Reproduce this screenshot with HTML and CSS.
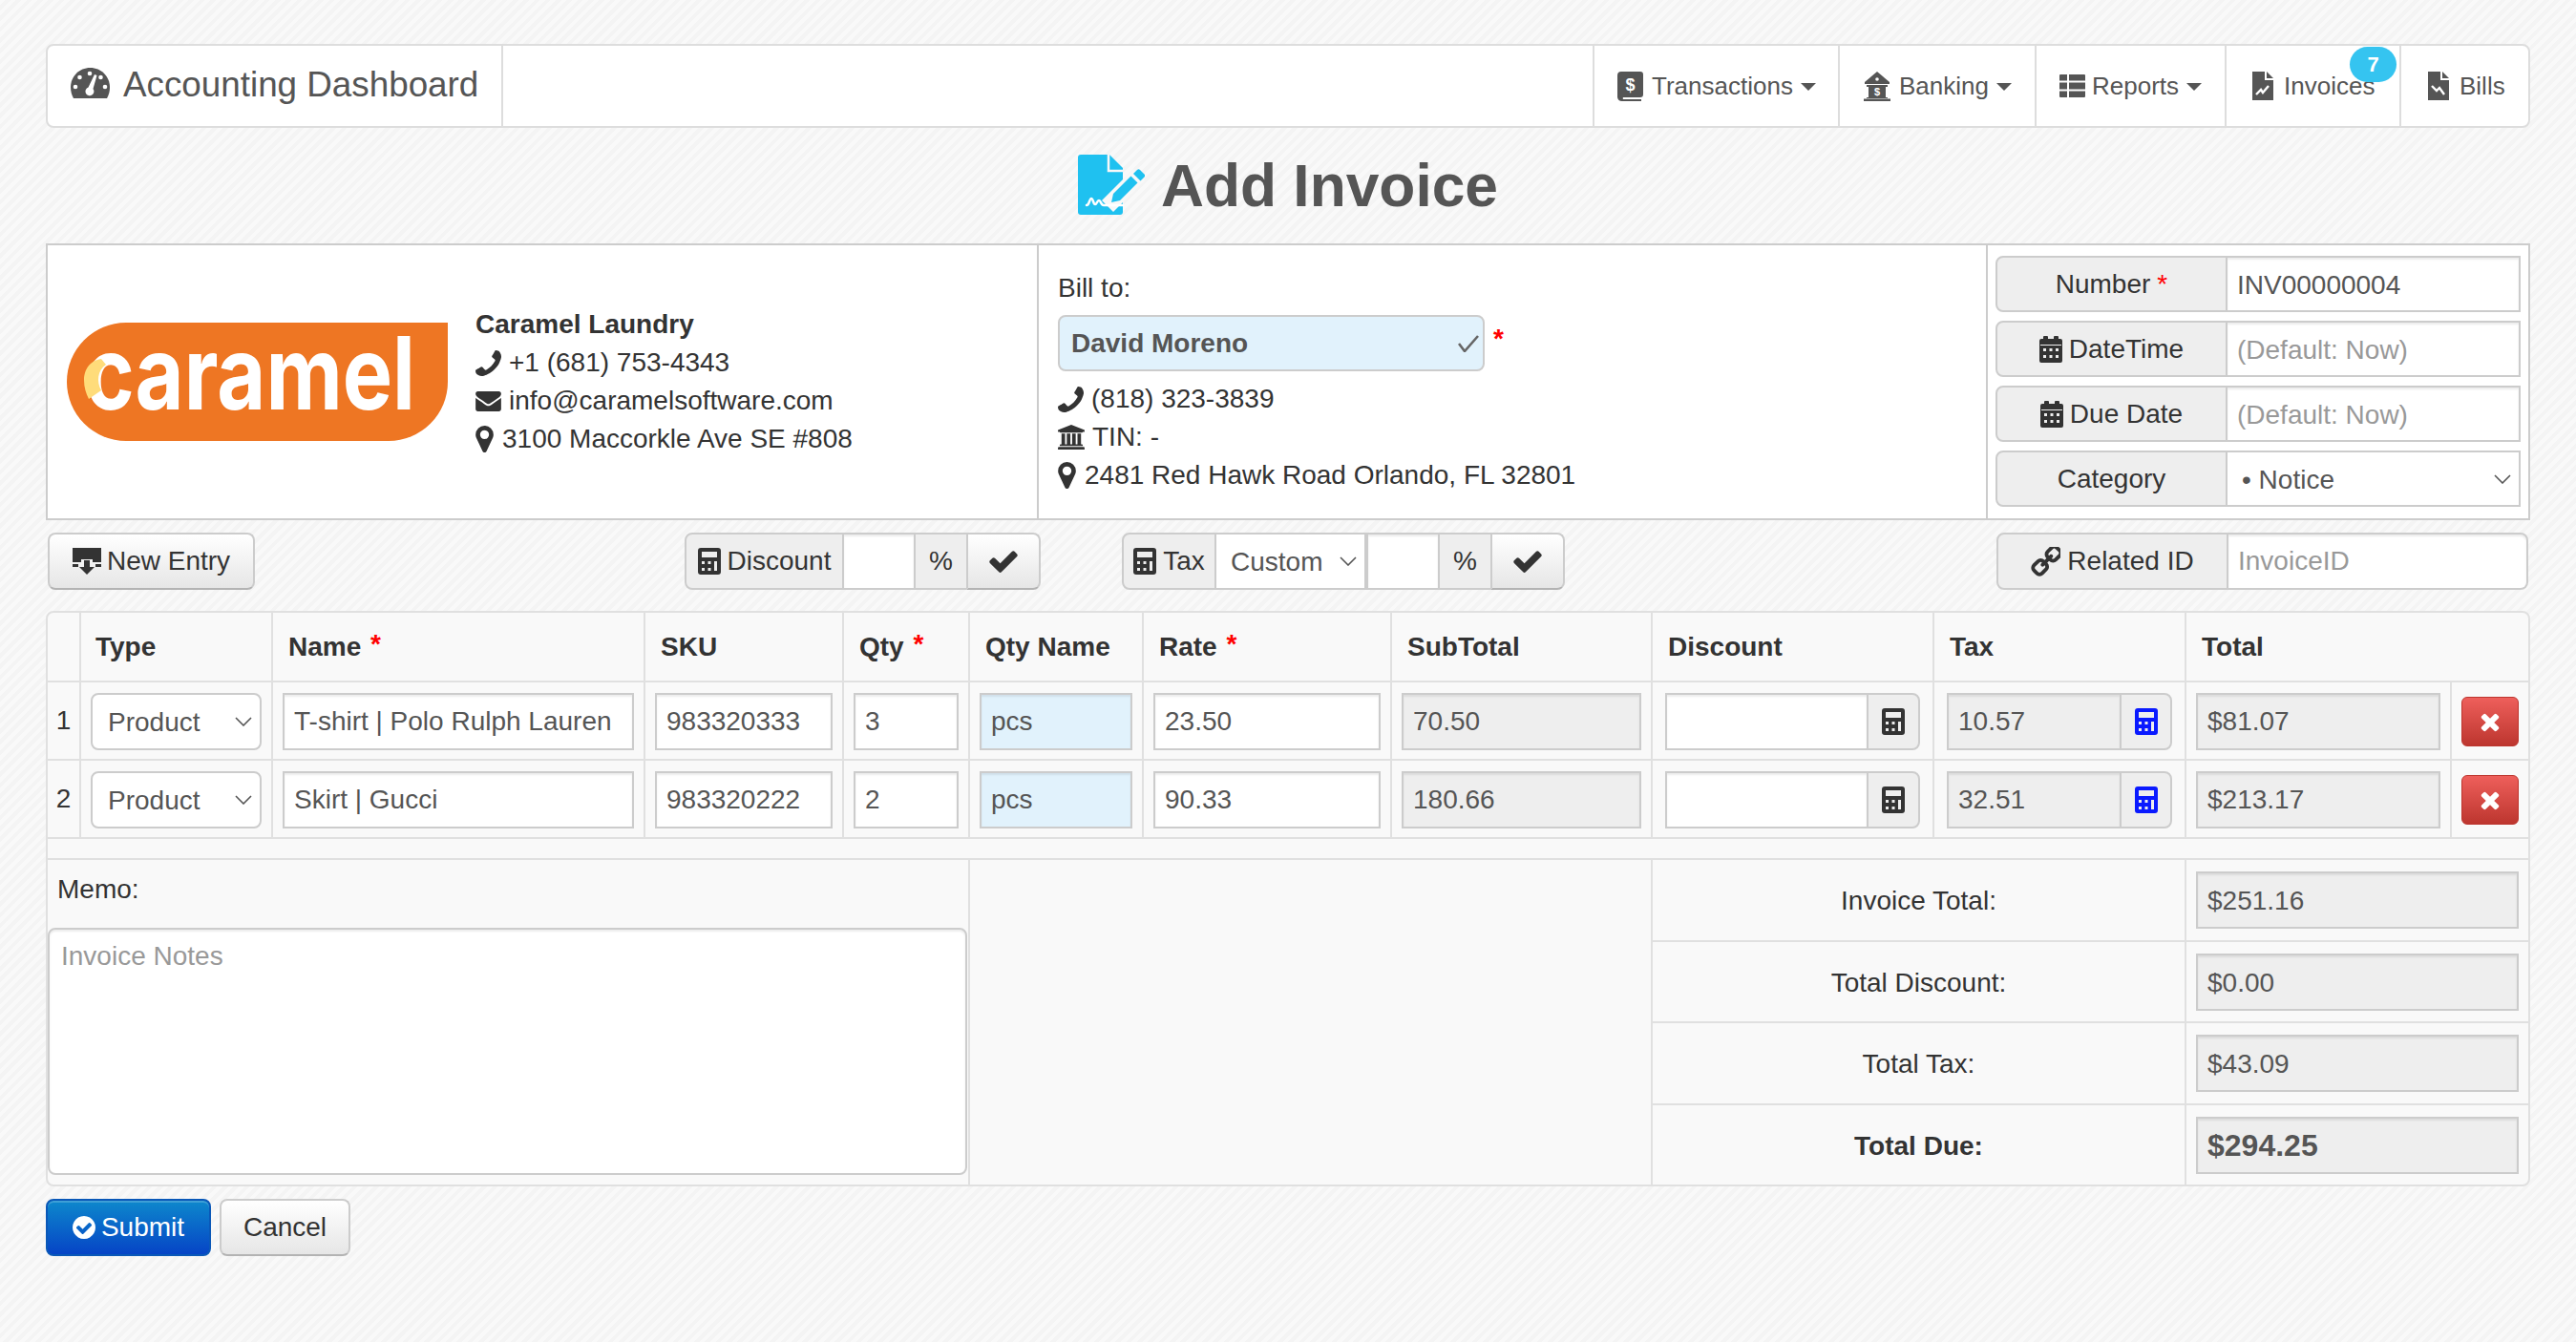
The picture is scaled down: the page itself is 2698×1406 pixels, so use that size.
FILE: index.html
```html
<!DOCTYPE html>
<html lang="en">
<head>
<meta charset="utf-8">
<title>Add Invoice</title>
<link rel="stylesheet" href="styles.css">
</head>
<body>
<svg class="defs" aria-hidden="true">
  <symbol id="i-phone" viewBox="0 128 1408 1408"><g transform="translate(1408 0) scale(-1 1)"><path d="M1408 1240q0 27-10 70.5t-21 68.5q-21 50-122 106-94 51-186 51-27 0-53-3.5t-57.500-12.500-47-14.500-55.500-20.500-49-18q-98-35-175-83-127-79-264-216t-216-264q-48-77-83-175-3-9-18-49t-20.500-55.500-14.500-47-12.500-57.500-3.500-53q0-92 51-186 56-101 106-122 25-11 68.500-21t70.500-10q14 0 21 3 18 6 53 76 11 19 30 54t35 63.500 31 53.500q3 4 17.500 25t21.500 35.500 7 28.500q0 20-28.500 50t-62 55-62 53-28.500 46q0 9 5 22.500t8.500 20.500 14 24 11.500 19q76 137 174 235t235 174q2 1 19 11.500t24 14 20.500 8.500 22.500 5q18 0 46-28.500t53-62 55-62 50-28.500q14 0 28.500 7t35.500 21.500 25 17.500q25 15 53.500 31t63.500 35 54 30q70 35 76 53 3 7 3 21z"/></g></symbol>
  <symbol id="i-mail" viewBox="0 256 1792 1408"><path d="M1792 710v794q0 66-47 113t-113 47h-1472q-66 0-113-47t-47-113v-794q44 49 101 87 362 246 497 345 57 42 92.500 65.500t94.500 48 110 24.500h2q51 0 110-24.500t94.500-48 92.500-65.500q170-123 498-345 57-39 100-87zm0-294q0 79-49 151t-122 123q-376 261-468 325-10 7-42.500 30.500t-54 38-52 32.500-57.500 27-50 9h-2q-23 0-50-9t-57.500-27-52-32.500-54-38-42.500-30.500q-91-64-262-182.500t-205-142.500q-62-42-117-115.500t-55-136.500q0-78 41.500-130t118.500-52h1472q65 0 112.500 47t47.500 113z"/></symbol>
  <symbol id="i-pin" viewBox="0 128 1024 1536"><path d="M768 640q0-106-75-181t-181-75-181 75-75 181 75 181 181 75 181-75 75-181zm256 0q0 109-33 179l-364 774q-16 33-47.500 52t-67.500 19-67.500-19-46.500-52l-365-774q-33-70-33-179 0-212 150-362t362-150 362 150 150 362z"/></symbol>
  <symbol id="i-check" viewBox="0 0 1792 1792"><path d="M1671 566q0 40-28 68l-724 724-136 136q-28 28-68 28t-68-28l-136-136-362-362q-28-28-28-68t28-68l136-136q28-28 68-28t68 28l294 295 656-657q28-28 68-28t68 28l136 136q28 28 28 68z"/></symbol>
  <symbol id="i-times" viewBox="0 0 1792 1792"><path d="M1490 1322q0 40-28 68l-136 136q-28 28-68 28t-68-28l-294-294-294 294q-28 28-68 28t-68-28l-136-136q-28-28-28-68t28-68l294-294-294-294q-28-28-28-68t28-68l136-136q28-28 68-28t68 28l294 294 294-294q28-28 68-28t68 28l136 136q28 28 28 68t-28 68l-294 294 294 294q28 28 28 68z"/></symbol>
  <symbol id="i-ok" viewBox="128 128 1536 1536"><path d="M1412 734q0-28-18-46l-91-90q-19-19-45-19t-45 19l-408 407-226-226q-19-19-45-19t-45 19l-91 90q-18 18-18 46 0 27 18 45l362 362q19 19 45 19 27 0 46-19l543-543q18-18 18-45zm252 162q0 209-103 385.500t-279.500 279.500-385.500 103-385.500-103-279.500-279.500-103-385.500 103-385.500 279.500-279.500 385.500-103 385.500 103 279.500 279.500 103 385.500z"/></symbol>
  <symbol id="i-link" viewBox="128 128 1536 1536"><g transform="translate(1792 0) scale(-1 1)"><path d="M1456 1216q0-40-28-68l-208-208q-28-28-68-28-42 0-72 32 3 3 19 18.500t21.500 21.500 15 19 13 25.500 3.500 27.500q0 40-28 68t-68 28q-15 0-27.500-3.500t-25.500-13-19-15-21.500-21.500-18.500-19q-33 31-33 73 0 40 28 68l206 207q27 27 68 27 40 0 68-26l147-146q28-28 28-67zm-703-705q0-40-28-68l-206-207q-28-28-68-28-39 0-68 27l-147 146q-28 28-28 67 0 40 28 68l208 208q27 27 68 27 42 0 72-31-3-3-19-18.500t-21.500-21.500-15-19-13-25.500-3.500-27.500q0-40 28-68t68-28q15 0 27.500 3.500t25.500 13 19 15 21.500 21.500 18.500 19q33-31 33-73zm895 705q0 120-85 203l-147 146q-83 83-203 83-121 0-204-85l-206-207q-83-83-83-203 0-123 88-209l-88-88q-86 88-208 88-120 0-204-84l-208-208q-84-84-84-204t85-203l147-146q83-83 203-83 121 0 204 85l206 207q83 83 83 203 0 123-88 209l88 88q86-88 208-88 120 0 204 84l208 208q84 84 84 204z"/></g></symbol>
  <symbol id="i-bank" viewBox="0 0 1920 1792"><path d="M960 0l960 384v128h-128q0 26-20.500 45t-48.500 19h-1526q-28 0-48.500-19t-20.500-45h-128v-128zm-704 640h256v768h128v-768h256v768h128v-768h256v768h128v-768h256v768h59q28 0 48.500 19t20.500 45v64h-1664v-64q0-26 20.500-45t48.500-19h59v-768zm1595 960q28 0 48.500 19t20.500 45v128h-1920v-128q0-26 20.500-45t48.500-19h1782z"/></symbol>
  <symbol id="i-cal" viewBox="0 0 24 28"><path fill-rule="evenodd" d="M5 0h3a1 1 0 0 1 1 1v2h6V1a1 1 0 0 1 1-1h3a1 1 0 0 1 1 1v2h2a2 2 0 0 1 2 2v21a2 2 0 0 1-2 2H2a2 2 0 0 1-2-2V5a2 2 0 0 1 2-2h2V1a1 1 0 0 1 1-1zM1 9v1h22V9zM4 13v3h3v-3zM10.500 13v3h3v-3zM17 13v3h3v-3zM4 20v3h3v-3zM10.500 20v3h3v-3zM17 20v3h3v-3z"/></symbol>
  <symbol id="i-calc" viewBox="0 0 24 28"><path fill-rule="evenodd" d="M3 0h18a3 3 0 0 1 3 3v22a3 3 0 0 1-3 3H3a3 3 0 0 1-3-3V3a3 3 0 0 1 3-3zM4 4v6h16V4zM4 14v3h3v-3zM10.500 14v3h3v-3zM17 14v10h3V14zM4 21v3h3v-3zM10.500 21v3h3v-3z"/></symbol>
  <symbol id="i-list" viewBox="0 0 27 24"><path d="M1 0h7v6.500H0V1a1 1 0 0 1 1-1zM10 0h16a1 1 0 0 1 1 1v5.500H10zM0 8.500h8v7H0zM10 8.500h17v7H10zM0 17.500h8V24H1a1 1 0 0 1-1-1zM10 17.500h17V23a1 1 0 0 1-1 1H10z"/></symbol>
  <symbol id="i-ledger" viewBox="0 0 27 31"><path d="M4 0h20a3 3 0 0 1 3 3v21a3 3 0 0 1-3 3H6a2 2 0 0 0 0 2h19v2H5a5 5 0 0 1-5-4V4a4 4 0 0 1 4-4z"/><text class="ico-dollar" x="13.500" y="20" text-anchor="middle">$</text></symbol>
  <symbol id="i-build" viewBox="0 0 30 31"><path d="M15 0l13 11v2H2v-2z"/><path d="M4 14h22v2h-2v11h2v1H4v-1h2V16H4zM1 28.500h28V31H1z"/><circle cx="15" cy="8" r="1.800" fill="#fff"/><text class="ico-dollar-s" x="15" y="25" text-anchor="middle">$</text></symbol>
  <symbol id="i-fileup" viewBox="0 0 22 30"><path d="M0 0h13v9h9v21H0z"/><path d="M15 0l7 7h-7z"/><path d="M4 24l5-5 2 3 6-7" fill="none" stroke="#fff" stroke-width="2.400"/></symbol>
  <symbol id="i-filedown" viewBox="0 0 22 30"><path d="M0 0h13v9h9v21H0z"/><path d="M15 0l7 7h-7z"/><path d="M4 15l5 5 3-3 5 7" fill="none" stroke="#fff" stroke-width="2.400"/></symbol>
  <symbol id="i-gauge" viewBox="0 0 41 32"><path d="M20.500 0C32 0 41 9 41 20.500c0 4-1 8-3 11.500H3C1 28.500 0 24.500 0 20.500 0 9 9 0 20.500 0z"/><g fill="#fff"><circle cx="20" cy="6" r="2.300"/><circle cx="9.500" cy="10" r="2.300"/><circle cx="31.500" cy="10" r="2.300"/><circle cx="5" cy="20" r="2.300"/><circle cx="36" cy="20" r="2.300"/><path d="M25 7l2.500 1-4 14a4.500 4.500 0 1 1-5-1.500z"/></g></symbol>
  <symbol id="i-new" viewBox="0 0 30 28"><path d="M0 0h30v15H21v-3H9v3H0z"/><path d="M12 13h6v7h5l-8 8-8-8h5z"/><path d="M0 17h6v3H0zM24 17h6v3h-6z"/></symbol>
</svg>

<div class="page">
  <nav class="nav">
    <div class="brand"><svg class="ic-gauge"><use href="#i-gauge"/></svg><span>Accounting Dashboard</span></div>
    <div class="nav-fill"></div>
    <a class="nav-item"><svg class="ic-ledger"><use href="#i-ledger"/></svg>Transactions<i class="caret"></i></a>
    <a class="nav-item"><svg class="ic-build"><use href="#i-build"/></svg>Banking<i class="caret"></i></a>
    <a class="nav-item"><svg class="ic-list"><use href="#i-list"/></svg>Reports<i class="caret"></i></a>
    <a class="nav-item nav-item-wide"><svg class="ic-file"><use href="#i-fileup"/></svg>Invoices<span class="badge">7</span></a>
    <a class="nav-item nav-item-last"><svg class="ic-file"><use href="#i-filedown"/></svg>Bills</a>
  </nav>

  <header class="title">
    <svg class="ic-title" viewBox="0 0 70 63">
      <path class="t-blue" d="M3 0H33L47 14V60a3 3 0 0 1-3 3H3a3 3 0 0 1-3-3V3a3 3 0 0 1 3-3z"/>
      <path d="M32 0V17H47" fill="none" stroke="#f8f8f8" stroke-width="2.500"/>
      <path d="M31 54L64 21" fill="none" stroke="#f8f8f8" stroke-width="17"/>
      <path class="t-blue" d="M35 50L37 41 55.500 22.500 62.500 29.500 44 48z"/>
      <path class="t-blue" d="M58 20l4-4a2 2 0 0 1 3 0l4.500 4.500a2 2 0 0 1 0 3l-4 4z"/>
      <path d="M9 53c3 0 3-7 5-7s2 6 4 6 2-4 4-4 2 5 5 5h20" fill="none" stroke="#fff" stroke-width="2.500" stroke-linecap="round"/>
    </svg>
    <h1>Add Invoice</h1>
  </header>

  <section class="head-box">
    <div class="company">
      <div class="logo">
        <span class="logo-text">caramel</span>
        <svg class="logo-moon" viewBox="0 0 399 124"><path d="M36 38C22 40 18 52 18 60C18 68 20 74 23 80L36 71C31 62 32 50 41 44z"/></svg>
      </div>
      <div class="info">
        <div class="strong">Caramel Laundry</div>
        <div class="line"><svg class="ic-phone"><use href="#i-phone"/></svg>+1 (681) 753-4343</div>
        <div class="line"><svg class="ic-mail"><use href="#i-mail"/></svg>info@caramelsoftware.com</div>
        <div class="line line-tight"><svg class="ic-pin"><use href="#i-pin"/></svg>3100 Maccorkle Ave SE #808</div>
      </div>
    </div>
    <div class="bill">
      <div class="bill-label">Bill to:</div>
      <div class="bill-select">
        <select class="select select-client"><option>David Moreno</option></select>
        <span class="req req-client">*</span>
      </div>
      <div class="line"><svg class="ic-phone"><use href="#i-phone"/></svg>(818) 323-3839</div>
      <div class="line"><svg class="ic-bank"><use href="#i-bank"/></svg>TIN: -</div>
      <div class="line line-tight"><svg class="ic-pin"><use href="#i-pin"/></svg>2481 Red Hawk Road Orlando, FL 32801</div>
    </div>
    <div class="meta">
      <div class="group group-meta"><label class="addon addon-label">Number <span class="req">*</span></label><input class="input input-join" value="INV00000004"></div>
      <div class="group group-meta"><label class="addon addon-label"><svg class="ic-cal"><use href="#i-cal"/></svg>DateTime</label><input class="input input-join" placeholder="(Default: Now)"></div>
      <div class="group group-meta"><label class="addon addon-label"><svg class="ic-cal"><use href="#i-cal"/></svg>Due Date</label><input class="input input-join" placeholder="(Default: Now)"></div>
      <div class="group group-meta"><label class="addon addon-label">Category</label><select class="select input-join"><option>&bull; Notice</option></select></div>
    </div>
  </section>

  <section class="toolbar">
    <button class="btn btn-new"><svg class="ic-new"><use href="#i-new"/></svg>New Entry</button>
    <div class="group group-discount">
      <label class="addon addon-left addon-disc"><svg class="ic-calc"><use href="#i-calc"/></svg>Discount</label>
      <input class="input input-join input-pct">
      <span class="addon addon-pct">%</span>
      <button class="btn btn-apply"><svg class="ic-check"><use href="#i-check"/></svg></button>
    </div>
    <div class="group group-tax">
      <label class="addon addon-left addon-tax"><svg class="ic-calc"><use href="#i-calc"/></svg>Tax</label>
      <select class="select input-join select-custom"><option>Custom</option></select>
      <input class="input input-join input-pct-b">
      <span class="addon addon-pct">%</span>
      <button class="btn btn-apply"><svg class="ic-check"><use href="#i-check"/></svg></button>
    </div>
    <div class="group group-related">
      <label class="addon addon-label"><svg class="ic-link"><use href="#i-link"/></svg>Related ID</label>
      <input class="input input-join input-round-r" placeholder="InvoiceID">
    </div>
  </section>

  <section class="table">
    <div class="t-row t-head">
      <div class="th"></div>
      <div class="th th-type">Type</div>
      <div class="th">Name <span class="req">*</span></div>
      <div class="th">SKU</div>
      <div class="th">Qty <span class="req">*</span></div>
      <div class="th">Qty Name</div>
      <div class="th">Rate <span class="req">*</span></div>
      <div class="th">SubTotal</div>
      <div class="th">Discount</div>
      <div class="th">Tax</div>
      <div class="th th-total">Total</div>
    </div>

    <div class="t-row t-body">
      <div class="td td-num">1</div>
      <div class="td"><select class="select select-round"><option>Product</option></select></div>
      <div class="td"><input class="input" value="T-shirt | Polo Rulph Lauren"></div>
      <div class="td"><input class="input" value="983320333"></div>
      <div class="td"><input class="input" value="3"></div>
      <div class="td"><input class="input input-blue" value="pcs"></div>
      <div class="td"><input class="input" value="23.50"></div>
      <div class="td"><input class="input input-ro" value="70.50" readonly></div>
      <div class="td td-wide"><div class="group"><input class="input"><span class="addon addon-end"><svg class="ic-calc"><use href="#i-calc"/></svg></span></div></div>
      <div class="td td-wide"><div class="group"><input class="input input-ro" value="10.57" readonly><span class="addon addon-end addon-blue"><svg class="ic-calc"><use href="#i-calc"/></svg></span></div></div>
      <div class="td"><input class="input input-ro" value="$81.07" readonly></div>
      <div class="td"><button class="btn-x"><svg class="ic-x"><use href="#i-times"/></svg></button></div>
    </div>

    <div class="t-row t-body">
      <div class="td td-num">2</div>
      <div class="td"><select class="select select-round"><option>Product</option></select></div>
      <div class="td"><input class="input" value="Skirt | Gucci"></div>
      <div class="td"><input class="input" value="983320222"></div>
      <div class="td"><input class="input" value="2"></div>
      <div class="td"><input class="input input-blue" value="pcs"></div>
      <div class="td"><input class="input" value="90.33"></div>
      <div class="td"><input class="input input-ro" value="180.66" readonly></div>
      <div class="td td-wide"><div class="group"><input class="input"><span class="addon addon-end"><svg class="ic-calc"><use href="#i-calc"/></svg></span></div></div>
      <div class="td td-wide"><div class="group"><input class="input input-ro" value="32.51" readonly><span class="addon addon-end addon-blue"><svg class="ic-calc"><use href="#i-calc"/></svg></span></div></div>
      <div class="td"><input class="input input-ro" value="$213.17" readonly></div>
      <div class="td"><button class="btn-x"><svg class="ic-x"><use href="#i-times"/></svg></button></div>
    </div>

    <div class="t-spacer"></div>

    <div class="t-foot">
      <div class="memo">
        <div class="memo-label">Memo:</div>
        <textarea class="memo-input" placeholder="Invoice Notes"></textarea>
      </div>
      <div class="foot-empty"></div>
      <div class="sum-label">Invoice Total:</div>
      <div class="sum-value"><input class="input input-ro" value="$251.16" readonly></div>
      <div class="sum-label">Total Discount:</div>
      <div class="sum-value"><input class="input input-ro" value="$0.00" readonly></div>
      <div class="sum-label">Total Tax:</div>
      <div class="sum-value"><input class="input input-ro" value="$43.09" readonly></div>
      <div class="sum-label sum-last sum-bold">Total Due:</div>
      <div class="sum-value sum-last"><input class="input input-ro input-bold" value="$294.25" readonly></div>
    </div>
  </section>

  <div class="actions">
    <button class="btn btn-submit"><svg class="ic-ok"><use href="#i-ok"/></svg>Submit</button>
    <button class="btn btn-cancel">Cancel</button>
  </div>
</div>
</body>
</html>
```

FILE: styles.css
```css
* { box-sizing: border-box; }
html, body { margin: 0; padding: 0; }
body {
  min-height: 1406px;
  font-family: "Liberation Sans", Arial, sans-serif;
  font-size: 28px;
  line-height: 40px;
  color: #333;
  background: repeating-linear-gradient(135deg, #f9f9f9 0 4px, #f4f4f4 4px 8px);
  overflow: hidden;
}
.defs { display: none; }
svg { fill: currentColor; flex: none; display: block; }
.page { width: 2602px; margin-left: 48px; padding-top: 46px; }

/* nav */
.nav {
  display: grid;
  grid-template-columns: 475px 1143px 257px 206px 199px 183px 135px;
  height: 88px;
  background: #fff;
  border: 2px solid #ddd;
  border-radius: 8px;
  color: #555;
}
.brand { display: flex; align-items: center; gap: 14px; padding: 0 0 2px 24px; font-size: 36.8px; white-space: nowrap; }
.ic-gauge { width: 41px; height: 32px; margin-top: -4px; }
.nav-fill { border-left: 2px solid #ddd; }
.nav-item {
  position: relative;
  display: flex;
  align-items: center;
  border-left: 2px solid #ddd;
  padding-left: 24px;
  font-size: 26px;
}
.nav-item-wide { padding-left: 27px; }
.nav-item-last { padding-left: 28px; }
.ic-ledger { width: 27px; height: 31px; margin-right: 9px; }
.ic-build { width: 30px; height: 31px; margin-right: 8px; }
.ic-list { width: 27px; height: 24px; margin-right: 7px; }
.ic-file { width: 22px; height: 30px; margin-right: 11px; }
.ico-dollar { font: 700 18px "Liberation Sans", sans-serif; fill: #fff; }
.ico-dollar-s { font: 700 11px "Liberation Sans", sans-serif; fill: #fff; }
.caret {
  width: 0; height: 0; margin-left: 8px; margin-top: 2px;
  border-left: 8px solid transparent;
  border-right: 8px solid transparent;
  border-top: 8px solid #555;
}
.badge {
  position: absolute;
  top: 1px; left: 129px;
  width: 49px; height: 37px;
  border-radius: 19px;
  background: #35c4f0;
  color: #fff;
  font-size: 22px;
  font-weight: 700;
  line-height: 37px;
  text-align: center;
}

/* title */
.title { height: 121px; display: flex; align-items: center; justify-content: center; gap: 17px; }
.title h1 { margin: 0; font-size: 62.3px; line-height: 70px; font-weight: 700; color: #555; }
.ic-title { width: 70px; height: 63px; margin-top: -2px; }
.t-blue { fill: #1fc1f0; }

/* head box */
.head-box {
  display: grid;
  grid-template-columns: 1036px 994px 568px;
  height: 290px;
  background: #fff;
  border: 2px solid #ccc;
}
.company { display: flex; align-items: center; padding-left: 20px; gap: 29px; }
.logo {
  position: relative;
  flex: none;
  width: 399px;
  height: 124px;
  border-radius: 62px 0 62px 62px;
  background: #ee7623;
}
.logo-text {
  position: absolute;
  left: 19px;
  top: -9px;
  font-family: Inter, sans-serif;
  font-weight: 700;
  font-size: 106px;
  line-height: 124px;
  color: #fff;
  white-space: nowrap;
  transform: scaleX(.83);
  transform-origin: 0 50%;
}
.logo-moon { position: absolute; left: 0; top: 0; width: 399px; height: 124px; fill: #ffdc7a; }
.strong { font-weight: 700; }
.line { display: flex; align-items: center; gap: 8px; white-space: nowrap; }
.line-tight { gap: 9px; }
.ic-phone { width: 27px; height: 27px; }
.ic-mail { width: 27px; height: 21px; }
.ic-pin { width: 19px; height: 28px; }
.ic-bank { width: 28px; height: 26px; }
.bill { border-left: 2px solid #ccc; padding: 25px 0 0 20px; }
.bill-select { display: flex; margin: 8px 0 9px; gap: 9px; }
.req { color: #f00; }
.req-client { font-weight: 700; line-height: 40px; margin-top: 5px; }
.meta { border-left: 2px solid #ccc; padding: 11px 0 0 8px; display: flex; flex-direction: column; gap: 9px; }

/* forms */
.group { display: flex; height: 60px; }
.group-meta { height: 59px; width: 550px; }
.input, .select {
  display: block;
  width: 100%;
  min-width: 0;
  height: 60px;
  margin: 0;
  padding: 0 10px;
  border: 2px solid #ccc;
  border-radius: 0;
  outline: none;
  background-color: #fff;
  box-shadow: inset 0 2px 2px rgba(0, 0, 0, .075);
  font-family: "Liberation Sans", Arial, sans-serif;
  font-size: 28px;
  color: #555;
}
.group-meta .input, .group-meta .select { height: 59px; padding-top: 2px; }
.input::placeholder, .memo-input::placeholder { color: #999; opacity: 1; }
.input-join { border-left: 0; }
.input-ro { background-color: #eee; }
.input-blue { background-color: #e1f2fc; }
.input-bold { font-weight: 700; font-size: 32px; }
.input-round-r { border-radius: 0 8px 8px 0; }
.select {
  appearance: none;
  -webkit-appearance: none;
  padding-left: 15px;
  box-shadow: none;
  background-image: url("data:image/svg+xml,%3Csvg xmlns='http://www.w3.org/2000/svg' width='18' height='10'%3E%3Cpath d='M1 1l8 8 8-8' fill='none' stroke='%23555' stroke-width='1.600'/%3E%3C/svg%3E");
  background-repeat: no-repeat;
  background-position: right 8px center;
}
.select-round { border-radius: 8px; padding-left: 16px; }
.select-client {
  width: 447px;
  height: 59px;
  border-radius: 8px;
  padding-left: 12px;
  font-weight: 700;
  background-color: #e1f2fc;
  background-image: url("data:image/svg+xml,%3Csvg xmlns='http://www.w3.org/2000/svg' width='22' height='18'%3E%3Cpath d='M1 9l6 8L21 1' fill='none' stroke='%23666' stroke-width='2.600'/%3E%3C/svg%3E");
  background-position: right 4px center;
}
.addon {
  flex: none;
  display: flex;
  align-items: center;
  justify-content: center;
  gap: 7px;
  background: #eee;
  border: 2px solid #ccc;
  color: #333;
  white-space: nowrap;
}
.addon-label { width: 243px; border-radius: 8px 0 0 8px; }
.addon-left { border-radius: 8px 0 0 8px; }
.addon-disc { width: 167px; }
.addon-tax { width: 99px; }
.addon-pct { width: 53px; border-left: 0; border-right: 0; }
.addon-end { width: 56px; margin-left: -2px; border-radius: 0 8px 8px 0; }
.addon-blue { width: 55px; color: #0a1aff; }
.ic-cal { width: 24px; height: 28px; }
.ic-calc { width: 24px; height: 28px; }
.ic-link { width: 31px; height: 31px; }
.ic-new { width: 30px; height: 28px; }
.ic-check { width: 34px; height: 34px; }
.ic-x { width: 28px; height: 28px; }
.ic-ok { width: 24px; height: 24px; }

/* toolbar */
.toolbar { display: flex; height: 95px; padding-top: 13px; }
.btn {
  height: 60px;
  margin: 0;
  padding: 0;
  font-family: "Liberation Sans", Arial, sans-serif;
  font-size: 28px;
  color: #333;
  border: 2px solid #ccc;
  border-bottom-color: #b3b3b3;
  border-radius: 8px;
  background: linear-gradient(#fff, #e6e6e6);
  box-shadow: inset 0 2px 0 rgba(255, 255, 255, .2);
  display: flex;
  align-items: center;
  justify-content: center;
  gap: 6px;
}
.btn-new { width: 217px; margin-left: 2px; }
.btn-apply { width: 78px; border-radius: 0 8px 8px 0; flex: none; }
.group-discount { margin-left: 450px; width: 373px; }
.input-pct { width: 75px; flex: none; }
.group-tax { margin-left: 85px; width: 464px; }
.select-custom { width: 157px; flex: none; padding-left: 15px; }
.input-pct-b { width: 77px; flex: none; border-left: 2px solid #ccc; }
.group-related { margin-left: 452px; width: 557px; }

/* table */
.table {
  width: 2602px;
  background: #f9f9f9;
  border: 2px solid #e0e0e0;
  border-radius: 8px;
}
.t-row {
  display: grid;
  grid-template-columns: 33px 201px 390px 208px 132px 182px 260px 273px 295px 264px 278px 82px;
  border-bottom: 2px solid #e0e0e0;
}
.t-head { height: 73px; }
.t-body { height: 82px; }
.th {
  display: flex;
  align-items: center;
  gap: 2px;
  padding-left: 16px;
  border-left: 2px solid #e0e0e0;
  font-weight: 700;
  white-space: pre;
}
.th:first-child { border-left: 0; }
.th-type { padding-left: 15px; }
.th .req { margin-top: -6px; font-weight: 700; }
.th-total { grid-column: span 2; }
.td { padding: 11px 10px 0 10px; border-left: 2px solid #e0e0e0; }
.td:first-child { border-left: 0; }
.td-num { padding: 20px 0 0; text-align: center; }
.td-wide { padding: 11px 13px 0 13px; }
.btn-x {
  display: flex;
  align-items: center;
  justify-content: center;
  width: 60px;
  height: 52px;
  margin: 4px 0 0;
  padding: 0;
  border: 1px solid #bd362f;
  border-radius: 6px;
  background: linear-gradient(#ee5f5b, #bd362f);
  color: #fff;
}
.t-spacer { height: 22px; border-bottom: 2px solid #e0e0e0; }
.t-foot {
  display: grid;
  grid-template-columns: 964px 715px 559px 360px;
  grid-template-rows: 86px 85px 86px 83px;
}
.memo { grid-row: 1 / span 4; padding-top: 11px; }
.memo-label { padding-left: 10px; }
.memo-input {
  display: block;
  width: 963px;
  height: 259px;
  margin: 20px 0 0 0;
  padding: 8px 12px;
  border: 2px solid #ccc;
  border-radius: 8px;
  outline: none;
  resize: none;
  background: #fff;
  box-shadow: inset 0 2px 2px rgba(0, 0, 0, .075);
  font-family: "Liberation Sans", Arial, sans-serif;
  font-size: 28px;
  line-height: 40px;
  color: #555;
}
.foot-empty { grid-column: 2; grid-row: 1 / span 4; border-left: 2px solid #e0e0e0; }
.sum-label {
  grid-column: 3;
  display: flex;
  align-items: center;
  justify-content: center;
  padding-top: 2px;
  border-left: 2px solid #e0e0e0;
  border-bottom: 2px solid #e0e0e0;
}
.sum-value {
  grid-column: 4;
  display: flex;
  align-items: center;
  padding: 0 10px 0 10px;
  border-left: 2px solid #e0e0e0;
  border-bottom: 2px solid #e0e0e0;
}
.sum-value .input { padding-top: 2px; }
.sum-last { border-bottom: 0; }
.sum-bold { font-weight: 700; }

/* actions */
.actions { display: flex; gap: 9px; margin-top: 13px; }
.btn-submit {
  width: 173px;
  color: #fff;
  border-color: #0a58b8;
  background: linear-gradient(#0d88cc, #0644c6);
}
.btn-cancel { width: 137px; }
```
